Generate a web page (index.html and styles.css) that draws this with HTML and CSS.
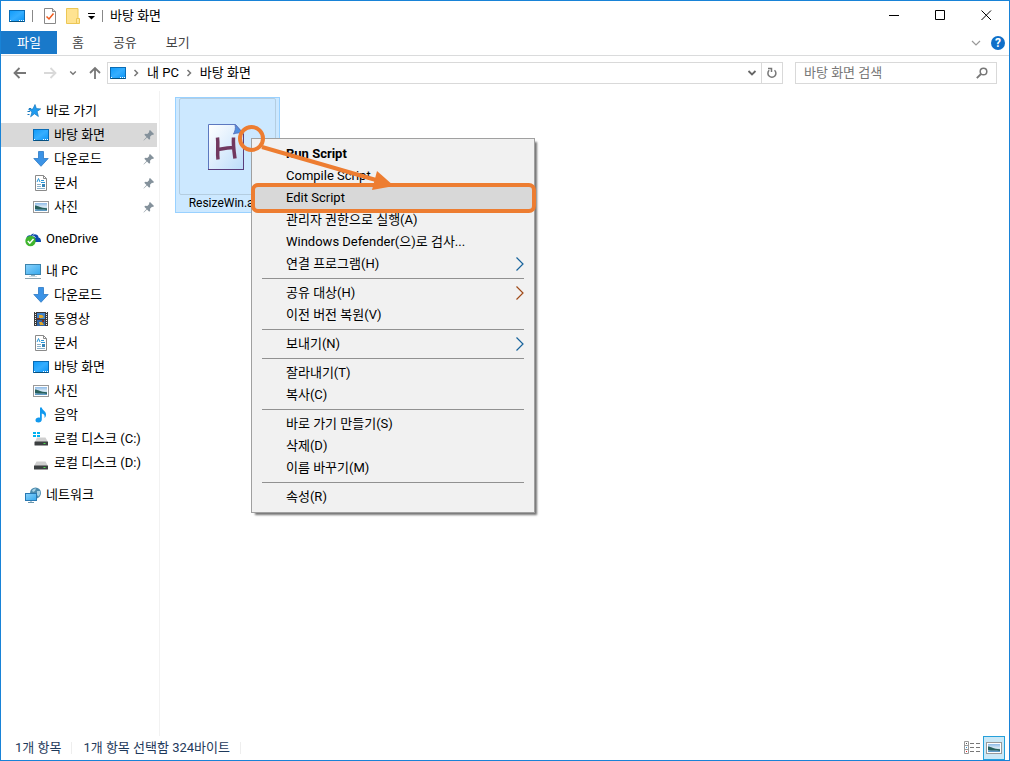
FILE: index.html
```html
<!DOCTYPE html>
<html lang="ko">
<head>
    <meta charset="UTF-8">
    <meta name="viewport" content="width=device-width, initial-scale=1.0">
    <title>바탕 화면</title>
    <link rel="stylesheet" href="styles.css">
</head>
<body>
    <!-- 아이콘 모음 -->
    <svg class="sprite" aria-hidden="true">
        <defs>
            <linearGradient id="g-blue" x1="0" y1="0" x2="1" y2="1">
                <stop offset="0" stop-color="#0f9bfa"/><stop offset=".5" stop-color="#35aeff"/><stop offset="1" stop-color="#0a93f5"/>
            </linearGradient>
            <linearGradient id="g-paper" x1="0" y1="0" x2="1" y2="1">
                <stop offset="0" stop-color="#fff"/><stop offset="1" stop-color="#bcdcfa"/>
            </linearGradient>
            <linearGradient id="g-screen" x1="0" y1="0" x2="1" y2="1">
                <stop offset="0" stop-color="#8bd2fb"/><stop offset="1" stop-color="#35a9ee"/>
            </linearGradient>
            <linearGradient id="g-photo" x1="0" y1="0" x2="0" y2="1">
                <stop offset="0" stop-color="#8ebbe8"/><stop offset=".5" stop-color="#dcebf5"/><stop offset="1" stop-color="#4d8fc0"/>
            </linearGradient>
        </defs>
        <symbol id="i-desktop" viewBox="0 0 16 16">
            <rect x=".5" y="2.5" width="15" height="11" fill="url(#g-blue)" stroke="#0a6cb5"/>
            <path d="M1 13.500h14" stroke="#06507f"/>
            <path d="M1 12.500h1M10 12.500h1M12 12.500h1M14 12.500h1" stroke="#fff"/>
        </symbol>
        <symbol id="i-star" viewBox="0 0 16 16">
            <path d="M10 1.5l1.4 4.1 4.3.3-3.6 2.6 1.3 5-3.9-2.700-3.9 3 1.4-4.8-3.500-2.700 4.400-.3z" fill="#1e9bf0" stroke="#1577bd" stroke-width=".7"/>
            <path d="M4 5.500h2M2.500 8.500h2.500M2.500 11.500h2" stroke="#1577bd"/>
        </symbol>
        <symbol id="i-down" viewBox="0 0 16 16">
            <path d="M5.500.5h5v7h4.700L8 15.300.8 7.500h4.700z" fill="#3b93e6" stroke="#2b78c4" stroke-width=".8"/>
        </symbol>
        <symbol id="i-doc" viewBox="0 0 16 16">
            <path d="M2.500.5h8l3 3v12h-11z" fill="#fff" stroke="#8a8a8a"/>
            <path d="M10.500.5v3h3" fill="none" stroke="#8a8a8a"/>
            <path d="M4 7L5.500 3.500 7 7M8 5.500h3M8 7.500h4" fill="none" stroke="#2a97d8"/>
            <path d="M4 9.500h4M4 11.500h4M4 13.500h8" stroke="#8cb2ca"/>
            <path d="M9 9h3v3H9z" fill="#3584b8"/>
        </symbol>
        <symbol id="i-photo" viewBox="0 0 16 16">
            <rect x=".5" y="2.500" width="15" height="11" fill="#fff" stroke="#999"/>
            <rect x="2" y="4" width="12" height="8" fill="url(#g-photo)"/>
            <path d="M2 6.500c3 0 5 2.500 12 2.700V11c-4-1-8 0-12-1z" fill="#28605c"/>
        </symbol>
        <symbol id="i-onedrive" viewBox="0 0 16 16">
            <path d="M6 10V6.500A4 4 0 0 1 11 3.500c2 .5 2.500 2 2.500 3 2 .5 2.500 2 2.500 4.500H6z" fill="#0c4bac"/>
            <path d="M1.500 7a3 3 0 0 1 4-2.500A5 5 0 0 1 9 2.500L5 8z" fill="#0c4bac"/>
            <path d="M4.500 9C5 5 8 4 10.500 6.500" fill="none" stroke="#fff"/>
            <circle cx="5.500" cy="10" r="5.200" fill="#3fb52e"/>
            <path d="M2.800 10l2 2.200L8.500 8" fill="none" stroke="#fff" stroke-width="1.500"/>
        </symbol>
        <symbol id="i-pc" viewBox="0 0 16 16">
            <rect x=".5" y="1.500" width="15" height="10" fill="url(#g-screen)" stroke="#3c83ac"/>
            <path d="M6 12.500h4" stroke="#8fb1c2"/>
            <path d="M4 13.500h8" stroke="#c9dbe4"/>
            <path d="M0 15.500h16" stroke="#8da5b0"/>
        </symbol>
        <symbol id="i-video" viewBox="0 0 16 16">
            <path d="M1 1h14v14H1z" fill="#3b3b3b"/>
            <path d="M2.500 1v14M13.500 1v14" stroke="#eee" stroke-dasharray="1 1"/>
            <path d="M4 2h8v6H4z" fill="#4182ca"/><path d="M4 9h8v6H4z" fill="#3064a6"/>
            <path d="M6 4h3l2 2-2 1H6zM6 11h3l2 3H7z" fill="#e2aa29"/>
            <path d="M4 7h3v1H4zM9 9h2v2H9z" fill="#7b3127"/>
        </symbol>
        <symbol id="i-music" viewBox="0 0 16 16">
            <path d="M7 .5h1.800c.3 3 4.200 3.500 4.200 7 0 1.500-.5 2.500-1.500 3.500.5-3-.5-4-2.700-4.500v6c0 2-1.500 3-3.300 3C3.500 15.500 2.500 14.500 2.500 13.200 2.500 11 5 10 7 10.800z" fill="#1299ee"/>
        </symbol>
        <symbol id="i-drive" viewBox="0 0 16 16">
            <path d="M3.500 6.500h9L15 11H1z" fill="#cfcfcf"/>
            <rect x="1" y="10.500" width="14" height="4" rx=".5" fill="#3c3f41"/>
            <path d="M10.500 12.500h2" stroke="#4be04b"/>
        </symbol>
        <symbol id="i-drive-os" viewBox="0 0 16 16">
            <path d="M4 6.500h8.500L15 11H2z" fill="#cfcfcf"/>
            <rect x="1.500" y="10.500" width="13.500" height="4" rx=".5" fill="#3c3f41"/>
            <path d="M10.500 12.500h2" stroke="#4be04b"/>
            <path d="M0 1h3v2H0zM4 1h3v2H4zM0 4h3v2H0zM4 4h3v2H4z" fill="#00b2f0"/>
        </symbol>
        <symbol id="i-network" viewBox="0 0 16 16">
            <circle cx="10.500" cy="6" r="5.500" fill="#4d8cae"/>
            <path d="M7 3.500c2-2 3-2 4-2l-1 2.500-2 1zM12 4l3 0c.5 2 0 4-1.500 5.500L12 8z" fill="#a9d3e6"/>
            <rect x=".5" y="6.500" width="11" height="7" fill="url(#g-screen)" stroke="#2878b2"/>
            <path d="M6 14v1M3 15.500h6" stroke="#6996ae"/>
        </symbol>
        <symbol id="i-pin" viewBox="0 0 12 12">
            <path d="M7 1l4 4-1 1-1-.3-2 2 .2 2-1 1L4 8.500.8 11.500.5 11.200 3.500 8 1.300 5.800l1-1 2 .2 2-2L6 2z" fill="#84919b"/>
        </symbol>
        <symbol id="i-next" viewBox="0 0 8 8">
            <path d="M2.500 1l3 3-3 3" fill="none" stroke="#777" stroke-width="1.500"/>
        </symbol>
        <symbol id="i-expand" viewBox="0 0 10 10">
            <path d="M1.500 3l3.500 3.500L8.500 3" fill="none" stroke="currentColor" stroke-width="1.800"/>
        </symbol>
        <symbol id="i-sub" viewBox="0 0 8 14">
            <path d="M.5.5L7 7 .5 13.500" fill="none" stroke="currentColor" stroke-width="1.200"/>
        </symbol>
    </svg>

    <div class="window">
        <!-- 제목 표시줄 -->
        <header class="title-bar">
            <svg class="icon"><use href="#i-desktop"/></svg>
            <span class="bar"></span>
            <button class="quick" aria-label="속성">
                <svg width="12" height="16" viewBox="0 0 12 16"><path d="M.5.5h8l3 3v12H.5z" fill="#fff" stroke="#888"/><path d="M8.500.5v3h3" fill="#ddd" stroke="#888"/><path d="M2.500 8.500L5 11l4.500-5.500" fill="none" stroke="#f05a1c" stroke-width="1.500"/></svg>
            </button>
            <button class="quick folder" aria-label="새 폴더">
                <svg width="14" height="16" viewBox="0 0 14 16"><path d="M.5.500h11.500v10h1.500v5H.5z" fill="#ffe391" stroke="#ecc755"/><path d="M10.500 15v-4.500H13" fill="#ffe9a8" stroke="#ecc755"/></svg>
            </button>
            <button class="quick" aria-label="사용자 지정">
                <svg width="7" height="8" viewBox="0 0 7 8"><path d="M0 1.500h7" stroke="#000"/><path d="M0 4h7L3.500 7.500z"/></svg>
            </button>
            <span class="bar"></span>
            <h1>바탕 화면</h1>
            <div class="controls">
                <button aria-label="최소화"><svg width="11" height="11"><path d="M0 5.500h10" stroke="#000"/></svg></button>
                <button aria-label="최대화"><svg width="11" height="11"><path d="M.5.5h9v9h-9z" fill="none" stroke="#000"/></svg></button>
                <button aria-label="닫기"><svg width="11" height="11"><path d="M.5.500l9.500 9.500M10 .5L.5 10" stroke="#000"/></svg></button>
            </div>
        </header>

        <nav class="ribbon">
            <button class="tab active">파일</button>
            <button class="tab">홈</button>
            <button class="tab">공유</button>
            <button class="tab">보기</button>
            <div class="ribbon-right">
                <button class="fold" aria-label="리본 확장"><svg width="10" height="10" viewBox="0 0 10 10"><path d="M1 3l4 4 4-4" fill="none" stroke="#999" stroke-width="1.200"/></svg></button>
                <button class="help" aria-label="도움말">?</button>
            </div>
        </nav>

        <!-- 주소 표시줄 -->
        <div class="nav-bar">
            <div class="arrows">
                <button aria-label="뒤로"><svg width="14" height="12" viewBox="0 0 14 12"><path d="M13 6H2M6.500 1L1.500 6l5 5" fill="none" stroke="#777" stroke-width="1.800"/></svg></button>
                <button aria-label="앞으로"><svg width="14" height="12" viewBox="0 0 14 12"><path d="M1 6h11M7.500 1l5 5-5 5" fill="none" stroke="#d9d9d9" stroke-width="1.800"/></svg></button>
                <button class="recent" aria-label="최근 위치"><svg width="8" height="8"><use href="#i-expand"/></svg></button>
                <button aria-label="위로"><svg width="12" height="14" viewBox="0 0 12 14"><path d="M6 13V2M1 7l5-5 5 5" fill="none" stroke="#777" stroke-width="1.800"/></svg></button>
            </div>
            <div class="address">
                <svg class="icon"><use href="#i-desktop"/></svg>
                <svg class="next"><use href="#i-next"/></svg>
                <button class="crumb">내 PC</button>
                <svg class="next"><use href="#i-next"/></svg>
                <button class="crumb">바탕 화면</button>
                <button class="history" aria-label="이전 위치"><svg width="10" height="10"><use href="#i-expand"/></svg></button>
                <button class="refresh" aria-label="새로 고침"><svg width="12" height="12" viewBox="0 0 12 12"><path d="M8.500 3.200A4 4 0 1 1 3.200 3.300" fill="none" stroke="#777" stroke-width="1.500"/><path d="M2 1.500h3.500V5" fill="none" stroke="#777" stroke-width="1.500"/></svg></button>
            </div>
            <label class="search">
                <input type="text" placeholder="바탕 화면 검색" aria-label="바탕 화면 검색">
                <svg width="12" height="12" viewBox="0 0 12 12"><circle cx="7.500" cy="4.500" r="3.300" fill="none" stroke="#777" stroke-width="1.500"/><path d="M5 7L.8 11.200" stroke="#777" stroke-width="1.800"/></svg>
            </label>
        </div>

        <div class="main">
            <nav class="sidebar">
                <ul>
                    <li><a href="#"><svg class="icon"><use href="#i-star"/></svg>바로 가기</a></li>
                    <li class="sub selected"><a href="#"><svg class="icon"><use href="#i-desktop"/></svg>바탕 화면<svg class="pin"><use href="#i-pin"/></svg></a></li>
                    <li class="sub"><a href="#"><svg class="icon"><use href="#i-down"/></svg>다운로드<svg class="pin"><use href="#i-pin"/></svg></a></li>
                    <li class="sub"><a href="#"><svg class="icon"><use href="#i-doc"/></svg>문서<svg class="pin"><use href="#i-pin"/></svg></a></li>
                    <li class="sub"><a href="#"><svg class="icon"><use href="#i-photo"/></svg>사진<svg class="pin"><use href="#i-pin"/></svg></a></li>
                </ul>
                <ul>
                    <li><a href="#"><svg class="icon"><use href="#i-onedrive"/></svg>OneDrive</a></li>
                </ul>
                <ul>
                    <li><a href="#"><svg class="icon"><use href="#i-pc"/></svg>내 PC</a></li>
                    <li class="sub"><a href="#"><svg class="icon"><use href="#i-down"/></svg>다운로드</a></li>
                    <li class="sub"><a href="#"><svg class="icon"><use href="#i-video"/></svg>동영상</a></li>
                    <li class="sub"><a href="#"><svg class="icon"><use href="#i-doc"/></svg>문서</a></li>
                    <li class="sub"><a href="#"><svg class="icon"><use href="#i-desktop"/></svg>바탕 화면</a></li>
                    <li class="sub"><a href="#"><svg class="icon"><use href="#i-photo"/></svg>사진</a></li>
                    <li class="sub"><a href="#"><svg class="icon"><use href="#i-music"/></svg>음악</a></li>
                    <li class="sub"><a href="#"><svg class="icon"><use href="#i-drive-os"/></svg>로컬 디스크 (C:)</a></li>
                    <li class="sub"><a href="#"><svg class="icon"><use href="#i-drive"/></svg>로컬 디스크 (D:)</a></li>
                </ul>
                <ul>
                    <li><a href="#"><svg class="icon"><use href="#i-network"/></svg>네트워크</a></li>
                </ul>
            </nav>

            <main class="files">
                <a class="file" href="#">
                    <span class="thumb">
                        <svg width="36" height="46" viewBox="0 0 36 46">
                            <path d="M.5.5h27l8 9v36H.5z" fill="url(#g-paper)" stroke="#5c78c0"/>
                            <path d="M27 .5c1 4 0 7-1.500 9.500 3-1.500 7-1.500 10 0z" fill="#4f8fe0" stroke="#5c78c0"/>
                            <path d="M0 45.500h36M35.500 10v36" stroke="#5a3d7c"/>
                            <path d="M9.500 13.500c1 8-.5 14 .5 22M25.500 13.500c-.5 8 .5 14 1.500 21M10 25.500c5-1 9-2 16-2" fill="none" stroke="#71385f" stroke-width="3.500"/>
                        </svg>
                    </span>
                    <span class="file-name">ResizeWin.ahk</span>
                </a>

                <!-- 마우스 오른쪽 메뉴 -->
                <div class="menu">
                    <button class="default">Run Script</button>
                    <button>Compile Script</button>
                    <button class="hover">Edit Script</button>
                    <button>관리자 권한으로 실행(A)</button>
                    <button>Windows Defender(으)로 검사...</button>
                    <button>연결 프로그램(H)<svg class="more"><use href="#i-sub"/></svg></button>
                    <hr>
                    <button>공유 대상(H)<svg class="more warm"><use href="#i-sub"/></svg></button>
                    <button>이전 버전 복원(V)</button>
                    <hr>
                    <button>보내기(N)<svg class="more"><use href="#i-sub"/></svg></button>
                    <hr>
                    <button>잘라내기(T)</button>
                    <button>복사(C)</button>
                    <hr>
                    <button>바로 가기 만들기(S)</button>
                    <button>삭제(D)</button>
                    <button>이름 바꾸기(M)</button>
                    <hr>
                    <button>속성(R)</button>
                </div>

                <!-- 강조 표시 -->
                <svg class="marks" width="300" height="92" viewBox="0 0 300 92">
                    <g fill="none" stroke="#ed7d31" stroke-width="4">
                        <circle cx="13.500" cy="14.500" r="11.500"/>
                        <path d="M24 23L138 56"/>
                        <rect x="15" y="61" width="281" height="26" rx="5"/>
                    </g>
                    <path d="M139 47l17 15-22 4z" fill="#ed7d31"/>
                </svg>
            </main>
        </div>

        <footer class="status">
            <span>1개 항목</span>
            <span>1개 항목 선택함 324바이트</span>
            <div class="views">
                <button aria-label="자세히"><svg width="16" height="14" viewBox="0 0 16 14"><path d="M.5.500h4v12h-4zM.5 4.500h4M.5 8.500h4" fill="none" stroke="#999"/><path d="M6 2.500h4M12 2.500h4M6 6.500h4M12 6.500h4M6 10.500h4M12 10.500h4" stroke="#777"/><path d="M2 2.500h1" stroke="#555"/><path d="M2 6.500h1" stroke="#2a97d8"/><path d="M2 10.500h1" stroke="#d22"/></svg></button>
                <button class="on" aria-label="큰 아이콘"><svg width="16" height="16"><use href="#i-photo"/></svg></button>
            </div>
        </footer>
    </div>
</body>
</html>
```

FILE: styles.css
```css
*{
    margin: 0;
    padding: 0;
    box-sizing: border-box;
}
html,body{
    height: 100%;
}
body{
    overflow: hidden;
    color: #000;
    background-color: #fff;
    font: 13px/20px Roboto, "Noto Sans CJK KR", sans-serif;
}
button,input{
    border: 0;
    background: none;
    font: inherit;
    color: inherit;
}
a{
    color: inherit;
    text-decoration: none;
}
ul{
    list-style: none;
}
svg{
    display: block;
    flex: none;
}
.sprite{
    position: absolute;
    width: 0;
    height: 0;
}
.icon{
    width: 16px;
    height: 16px;
}
.window{
    height: 100%;
    display: flex;
    flex-direction: column;
    border: 1px solid #1883d7;
}

/* 제목 표시줄 */
.title-bar{
    height: 29px;
    display: flex;
    align-items: center;
    padding-left: 8px;
}
.bar{
    width: 1px;
    height: 12px;
    margin: 0 7px;
    background-color: #888;
}
.title-bar .quick{
    margin-left: 4px;
}
.title-bar .folder{
    margin: 0 4px 0 10px;
}
.title-bar h1{
    font-size: 13px;
    font-weight: normal;
}
.controls{
    display: flex;
    align-self: stretch;
    margin-left: auto;
}
.controls button{
    width: 46px;
    display: flex;
    align-items: center;
    justify-content: center;
}

/* 리본 */
.ribbon{
    height: 26px;
    display: flex;
    gap: 1px;
    padding: 1px 0;
    border-bottom: 1px solid #dadbdc;
}
.tab{
    padding: 0 14px;
    color: #444;
}
.tab.active{
    padding: 0 16px;
    color: #fff;
    background-color: #1979ca;
}
.ribbon-right{
    display: flex;
    align-items: center;
    gap: 10px;
    margin-left: auto;
    padding-right: 4px;
}
.help{
    width: 14px;
    height: 14px;
    border-radius: 50%;
    background-color: #0f6fc9;
    color: #fff;
    font-size: 12px;
    font-weight: bold;
    line-height: 14px;
}

/* 주소 표시줄 */
.nav-bar{
    display: flex;
    align-items: center;
    gap: 12px;
    padding: 6px 12px 7px;
}
.arrows{
    display: flex;
    align-items: center;
    gap: 12px;
    color: #777;
}
.arrows button:nth-child(2){
    margin-left: 4px;
}
.address,.search{
    height: 22px;
    display: flex;
    align-items: center;
    border: 1px solid #d9d9d9;
}
.address{
    flex: 1;
    margin-left: -6px;
    padding-left: 2px;
}
.next{
    width: 8px;
    height: 8px;
    margin: 0 7px 0 6px;
}
.crumb{
    line-height: 18px;
}
.history{
    margin-left: auto;
    padding-right: 4px;
    color: #666;
}
.refresh{
    align-self: stretch;
    padding: 0 4px;
    border-left: 1px solid #d9d9d9;
}
.search{
    width: 202px;
    padding: 0 8px;
}
.search input{
    flex: 1;
    min-width: 0;
    height: 18px;
    outline: 0;
}
.search input::placeholder{
    color: #777;
}

/* 왼쪽 탐색 창 */
.main{
    flex: 1;
    min-height: 0;
    display: flex;
}
.sidebar{
    width: 159px;
    padding: 8px 2px 0 0;
    border-right: 1px solid #f2f2f2;
}
.sidebar ul{
    margin-bottom: 8px;
}
.sidebar a{
    height: 24px;
    display: flex;
    align-items: center;
    gap: 5px;
    padding: 0 2px 0 24px;
}
.sidebar .sub a{
    padding-left: 32px;
}
.sidebar .selected{
    background-color: #d9d9d9;
}
.pin{
    width: 12px;
    height: 12px;
    margin-left: auto;
}

/* 파일 목록 */
.files{
    flex: 1;
    position: relative;
    padding: 6px 15px;
}
.file{
    width: 105px;
    height: 116px;
    display: flex;
    flex-direction: column;
    align-items: center;
    border: 1px solid #99d1ff;
    background-color: #cce8ff;
}
.thumb{
    width: 97px;
    height: 97px;
    display: flex;
    align-items: center;
    justify-content: center;
    padding-right: 4px;
    border: 1px solid #b4cde0;
    border-radius: 2px;
}
.file-name{
    font-size: 12px;
    line-height: 16px;
}

/* 오른쪽 메뉴 */
.menu{
    width: 284px;
    position: absolute;
    left: 91px;
    top: 47px;
    display: flex;
    flex-direction: column;
    padding: 4px 2px;
    border: 1px solid #a0a0a0;
    background-color: #f1f1f1;
    box-shadow: 3px 3px 2px -1px rgba(0, 0, 0, 0.55);
}
.menu button{
    height: 22px;
    display: flex;
    align-items: center;
    justify-content: space-between;
    padding: 0 8px 0 32px;
    line-height: 22px;
}
.menu .default{
    font-weight: bold;
}
.menu .hover{
    background-color: #d8d8d8;
}
.menu hr{
    margin: 3px 8px;
    border: 0;
    border-top: 1px solid #919191;
}
.more{
    width: 8px;
    height: 14px;
    color: #17639c;
}
.more.warm{
    color: #a04a18;
}
.marks{
    position: absolute;
    left: 78px;
    top: 33px;
    pointer-events: none;
}

/* 상태 표시줄 */
.status{
    height: 24px;
    display: flex;
    align-items: center;
    padding: 0 4px 0 14px;
    color: #1e395b;
}
.status span{
    margin-right: 11px;
    padding-right: 10px;
    border-right: 1px solid #eee;
    line-height: 12px;
}
.views{
    display: flex;
    align-self: stretch;
    gap: 3px;
    margin-left: auto;
}
.views .on{
    padding: 0 2px;
    border: 1px solid #26a0da;
    background-color: #cbe8f6;
}
```
